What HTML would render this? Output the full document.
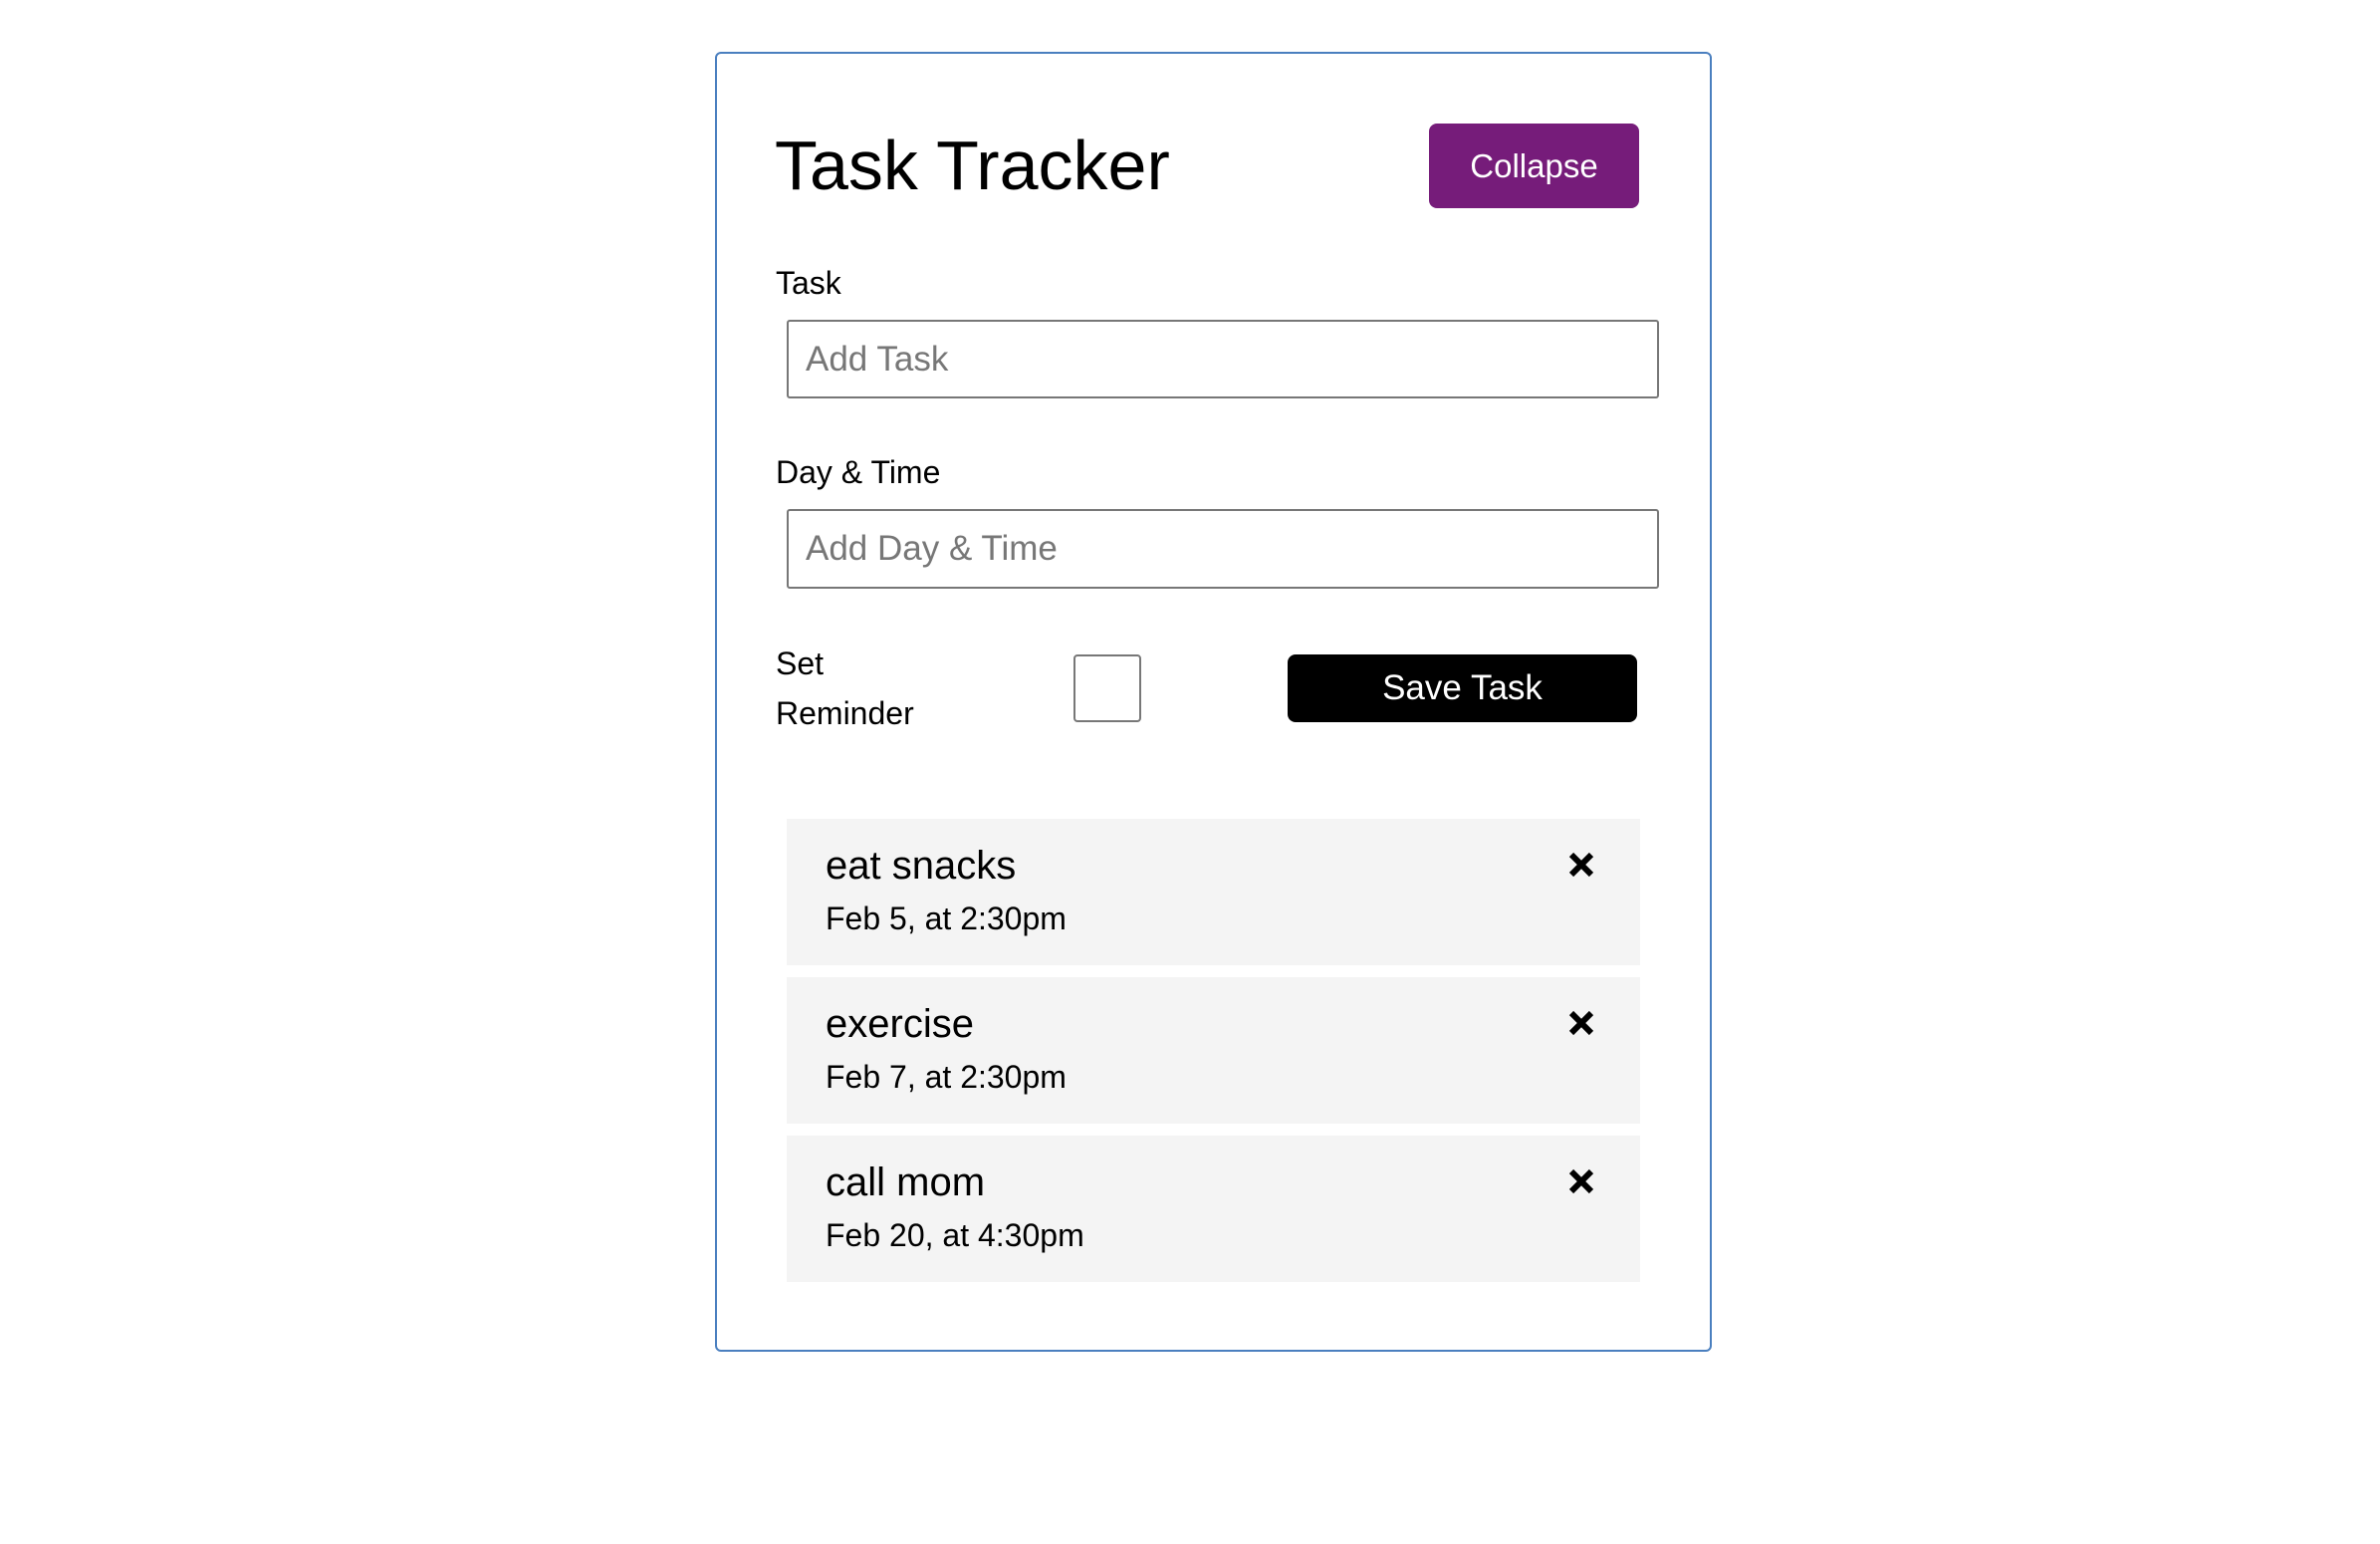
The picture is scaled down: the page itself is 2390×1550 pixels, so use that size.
<!DOCTYPE html>
<html><head><meta charset="utf-8"><style>
html,body{margin:0;padding:0;background:#fff;width:2390px;height:1550px;overflow:hidden;font-family:"Liberation Sans",sans-serif;color:#000}
.a{position:absolute}
.card{left:718px;top:52px;width:1001px;height:1305px;border:2px solid #4a7fbf;border-radius:6px;box-sizing:border-box}
.lbl{font-size:32px;line-height:1;left:779px}
.inp{left:790px;width:876px;border:2px solid #777;border-radius:3px;box-sizing:border-box;font-size:35px;color:#777;padding-left:17px;display:flex;align-items:center}
.item{left:790px;width:857px;height:147px;background:#f4f4f4}
.t{left:39px;top:27px;font-size:40px;line-height:1;font-weight:500}
.d{left:39px;top:84px;font-size:32px;line-height:1}
.x{left:783px;top:31px;width:30px;height:30px}
</style></head><body>
<div class="a card"></div>
<div class="a" style="left:778px;top:131px;font-size:70px;line-height:1;font-weight:500">Task Tracker</div>
<div class="a" style="left:1435px;top:124px;width:211px;height:85px;background:#761c7a;border-radius:8px;color:#fff;font-size:33px;display:flex;align-items:center;justify-content:center">Collapse</div>
<div class="a lbl" style="top:268px">Task</div>
<div class="a inp" style="top:321px;height:79px">Add Task</div>
<div class="a lbl" style="top:458px">Day &amp; Time</div>
<div class="a inp" style="top:511px;height:80px">Add Day &amp; Time</div>
<div class="a lbl" style="top:650px">Set</div>
<div class="a lbl" style="top:700px">Reminder</div>
<div class="a" style="left:1078px;top:657px;width:68px;height:68px;border:2px solid #777;border-radius:4px;box-sizing:border-box"></div>
<div class="a" style="left:1293px;top:657px;width:351px;height:68px;background:#000;border-radius:8px;color:#fff;font-size:35px;display:flex;align-items:center;justify-content:center">Save Task</div>
<div class="a item" style="top:822px"><div class="a t">eat snacks</div><div class="a d">Feb 5, at 2:30pm</div><svg class="a x" viewBox="0 0 30 30"><path d="M5 5L25 25M25 5L5 25" stroke="#000" stroke-width="6"/></svg></div>
<div class="a item" style="top:981px"><div class="a t">exercise</div><div class="a d">Feb 7, at 2:30pm</div><svg class="a x" viewBox="0 0 30 30"><path d="M5 5L25 25M25 5L5 25" stroke="#000" stroke-width="6"/></svg></div>
<div class="a item" style="top:1140px"><div class="a t">call mom</div><div class="a d">Feb 20, at 4:30pm</div><svg class="a x" viewBox="0 0 30 30"><path d="M5 5L25 25M25 5L5 25" stroke="#000" stroke-width="6"/></svg></div>
</body></html>
